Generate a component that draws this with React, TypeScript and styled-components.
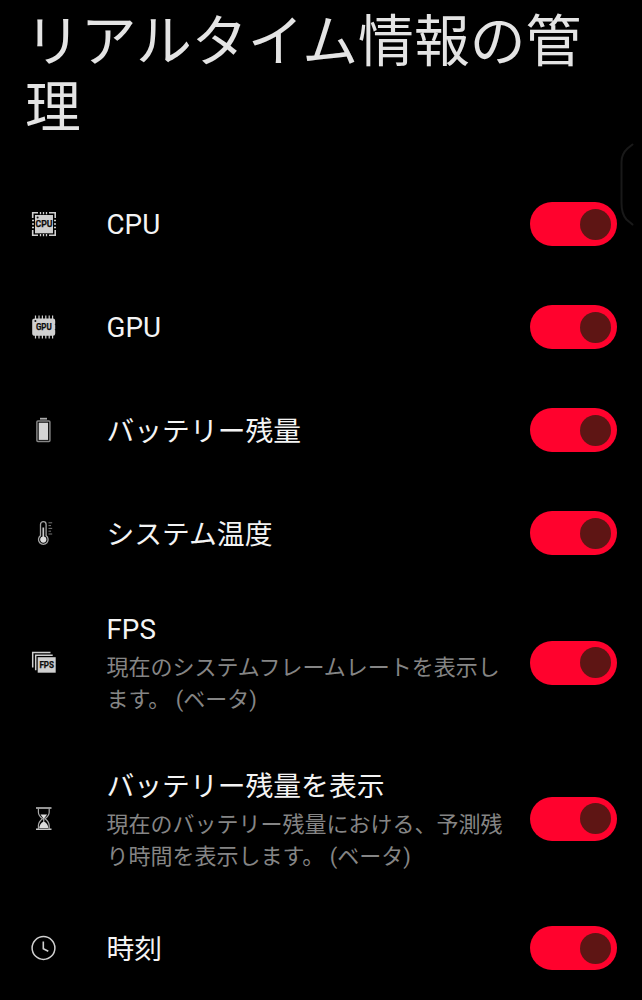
import React from 'react';
import styled, { createGlobalStyle } from 'styled-components';

const GlobalStyle = createGlobalStyle`
  body {
    margin: 0;
    background: #000;
    font-family: Roboto, "Noto Sans CJK JP", sans-serif;
  }
`;

const Screen = styled.main`
  position: relative;
  display: flex;
  flex-direction: column;
  width: 642px;
  height: 1000px;
  overflow: hidden;
  background: #000;
`;

const Header = styled.header`
  box-sizing: border-box;
  height: 173px;
  padding: 9px 50px 0 25px;
  flex: none;
`;

const Title = styled.h1`
  margin: 0;
  font-size: 55.8px;
  font-weight: 400;
  line-height: 66px;
  color: #e4e4e4;
  word-break: break-all;
`;

const List = styled.ul`
  margin: 0;
  padding: 0;
  list-style: none;
`;

const Row = styled.li<{ $tall?: boolean }>`
  display: flex;
  align-items: center;
  box-sizing: border-box;
  height: ${(p) => (p.$tall ? 156 : 102.9)}px;
  padding: 0 25px 0 29px;
`;

const IconSlot = styled.div`
  width: 77.5px;
  flex: none;
  svg {
    display: block;
  }
`;

const TextColumn = styled.div`
  flex: 1;
  min-width: 0;
`;

const Label = styled.div<{ $latin: boolean }>`
  padding-top: ${(p) => (p.$latin ? 0 : 2.4)}px;
  font-size: 27.8px;
  line-height: 43px;
  color: #f4f4f4;
  white-space: nowrap;
`;

const Details = styled.div<{ $gap: number }>`
  padding-top: ${(p) => p.$gap}px;
  padding-bottom: 1px;
`;

const Description = styled.div`
  font-size: 22px;
  line-height: 32px;
  color: #858585;
  white-space: nowrap;
`;

const Toggle = styled.button`
  display: flex;
  align-items: center;
  justify-content: flex-end;
  box-sizing: border-box;
  width: 87px;
  height: 44px;
  flex: none;
  padding: 0 6px;
  border: 0;
  border-radius: 22px;
  background: #ff022d;
`;

const Knob = styled.span`
  width: 31px;
  height: 31px;
  border-radius: 50%;
  background: #5e1514;
`;

const EdgeHandle = styled.svg`
  position: absolute;
  top: 140px;
  right: 6px;
`;

const fill = '#cfcfcf';

const Glyph = ({ children }: { children: React.ReactNode }) => (
  <svg width="29" height="30" viewBox="0 0 29 30" fill="none">{children}</svg>
);

const Badge = ({ x, y, size, width, children }: { x: number; y: number; size: number; width: number; children: string }) => (
  <text x={x} y={y} fontSize={size} fontWeight="700" fontFamily="Roboto, sans-serif" textAnchor="middle" textLength={width} lengthAdjust="spacingAndGlyphs" fill="#0c0c0c" stroke="#0c0c0c" strokeWidth="0.25">
    {children}
  </text>
);

const CpuIcon = () => (
  <Glyph>
    <path d="M3.7 9V3.8H9M20 3.8h6.2V9M26.2 21v5.3H20M9 26.3H3.7V21" stroke={fill} strokeWidth="1.6" />
    <path d="M11.5 3v2.2M14.5 3v2.2M17.5 3v2.2M11.5 25v2.2M14.5 25v2.2M17.5 25v2.2M3 11.5h2M3 15h2M3 18.5h2M25 11.5h2M25 15h2M25 18.5h2" stroke={fill} strokeWidth="1.3" />
    <rect x="6" y="6" width="18" height="18.3" fill={fill} />
    <circle cx="8.6" cy="8.6" r="1" fill="#111" />
    <Badge x={15} y={18.4} size={9.8} width={17}>CPU</Badge>
  </Glyph>
);

const GpuIcon = () => (
  <Glyph>
    <path d="M6.5 3.5v23M10 3.5v23M13.4 3.5v23M16.8 3.5v23M20.2 3.5v23M23.6 3.5v23" stroke={fill} strokeWidth="1.2" />
    <path d="M6 6.5h18q2.2 0 2.2 2.2v3.1q-1.2.5 0 1v4.5q-1.2.5 0 1v3.1q0 2.3-2.2 2.3H6q-2.8 0-2.8-2.3V8.700Q3.200 6.500 6 6.500Z" fill={fill} />
    <circle cx="6.4" cy="9" r="1" fill="#111" />
    <Badge x={14.8} y={18} size={9} width={15.8}>GPU</Badge>
  </Glyph>
);

const BatteryIcon = () => (
  <Glyph>
    <path d="M11 3.7h7" stroke="#aaa" strokeWidth="1.8" />
    <rect x="7.9" y="6" width="13" height="20.5" rx="1" stroke="#858585" strokeWidth="1.5" />
    <rect x="9.7" y="7.7" width="9.4" height="17.2" fill="#d5d5d5" />
  </Glyph>
);

const ThermometerIcon = () => (
  <Glyph>
    <path d="M11.5 17.6V6.5a2.8 2.8 0 0 1 5.6 0v11.1a4.8 4.8 0 1 1-5.6 0Z" stroke="#a5a5a5" strokeWidth="1.3" />
    <path d="M14.3 9.5V20" stroke="#c8c8c8" strokeWidth="1.7" />
    <circle cx="14.3" cy="21.6" r="3.1" fill="#dedede" />
    <path d="M19.5 4.8h3.7M19.5 7.6h2.5M19.5 10.4h3.7M19.5 13.2h2.5M19.5 16h3.7" stroke="#777" strokeWidth="1" />
  </Glyph>
);

const FpsIcon = () => (
  <Glyph>
    <path d="M3.7 19.5V4.5h17.8M6.7 22.200V7.300h17" stroke={fill} strokeWidth="1.5" />
    <rect x="8.7" y="9.2" width="18" height="15.5" fill={fill} />
    <Badge x={17.7} y={20.3} size={8.6} width={14.6}>FPS</Badge>
  </Glyph>
);

const HourglassIcon = () => (
  <Glyph>
    <path d="M7 4h15.5M7 25.3h15.5" stroke="#c5c5c5" strokeWidth="1.4" />
    <path d="M9.4 4.5v3.7q0 3.1 4.1 6.6-4.1 3.4-4.1 6.8v3.500M20.200 4.500v3.700q0 3.100-4.100 6.600 4.100 3.400 4.100 6.800v3.500" stroke="#a8a8a8" strokeWidth="1.2" />
    <path d="M11.5 10.6h6.6L15.300 14.200v3.600q3.600 1.800 4.100 6.200H10.200q.5-4.400 4.100-6.200v-3.600Z" fill="#dcdcdc" />
  </Glyph>
);

const ClockIcon = () => (
  <Glyph>
    <circle cx="14.5" cy="15" r="11.4" stroke="#d0d0d0" strokeWidth="1.5" />
    <path d="M14.3 8.6v7.1l5 2.6" stroke="#d0d0d0" strokeWidth="1.6" />
  </Glyph>
);

interface Item {
  icon: React.ReactNode;
  label: string;
  latin?: boolean;
  gap?: number;
  lines?: string[];
}

const items: Item[] = [
  { icon: <CpuIcon />, label: 'CPU', latin: true },
  { icon: <GpuIcon />, label: 'GPU', latin: true },
  { icon: <BatteryIcon />, label: 'バッテリー残量' },
  { icon: <ThermometerIcon />, label: 'システム温度' },
  { icon: <FpsIcon />, label: 'FPS', latin: true, gap: 0.6, lines: ['現在のシステムフレームレートを表示し', 'ます。 (ベータ)'] },
  { icon: <HourglassIcon />, label: 'バッテリー残量を表示', gap: 1, lines: ['現在のバッテリー残量における、予測残', 'り時間を表示します。 (ベータ)'] },
  { icon: <ClockIcon />, label: '時刻' },
];

export default function App() {
  return (
    <Screen lang="ja">
      <GlobalStyle />
      <Header>
        <Title>リアルタイム情報の管理</Title>
      </Header>
      <List>
        {items.map(({ icon, label, latin, gap, lines }) => (
          <Row key={label} $tall={!!lines}>
            <IconSlot>{icon}</IconSlot>
            <TextColumn>
              <Label $latin={!!latin}>{label}</Label>
              {lines && (
                <Details $gap={gap ?? 0}>
                  {lines.map((line) => <Description key={line}>{line}</Description>)}
                </Details>
              )}
            </TextColumn>
            <Toggle role="switch" aria-checked="true" aria-label={label}>
              <Knob />
            </Toggle>
          </Row>
        ))}
      </List>
      <EdgeHandle width="16" height="90" viewBox="0 0 16 90" fill="none">
        <path d="M12.5 4.5 7.5 8.5Q1.500 14 1.500 22v41q0 11 5 16.500l6 5" stroke="#191919" strokeWidth="2" strokeLinecap="round" />
      </EdgeHandle>
    </Screen>
  );
}
